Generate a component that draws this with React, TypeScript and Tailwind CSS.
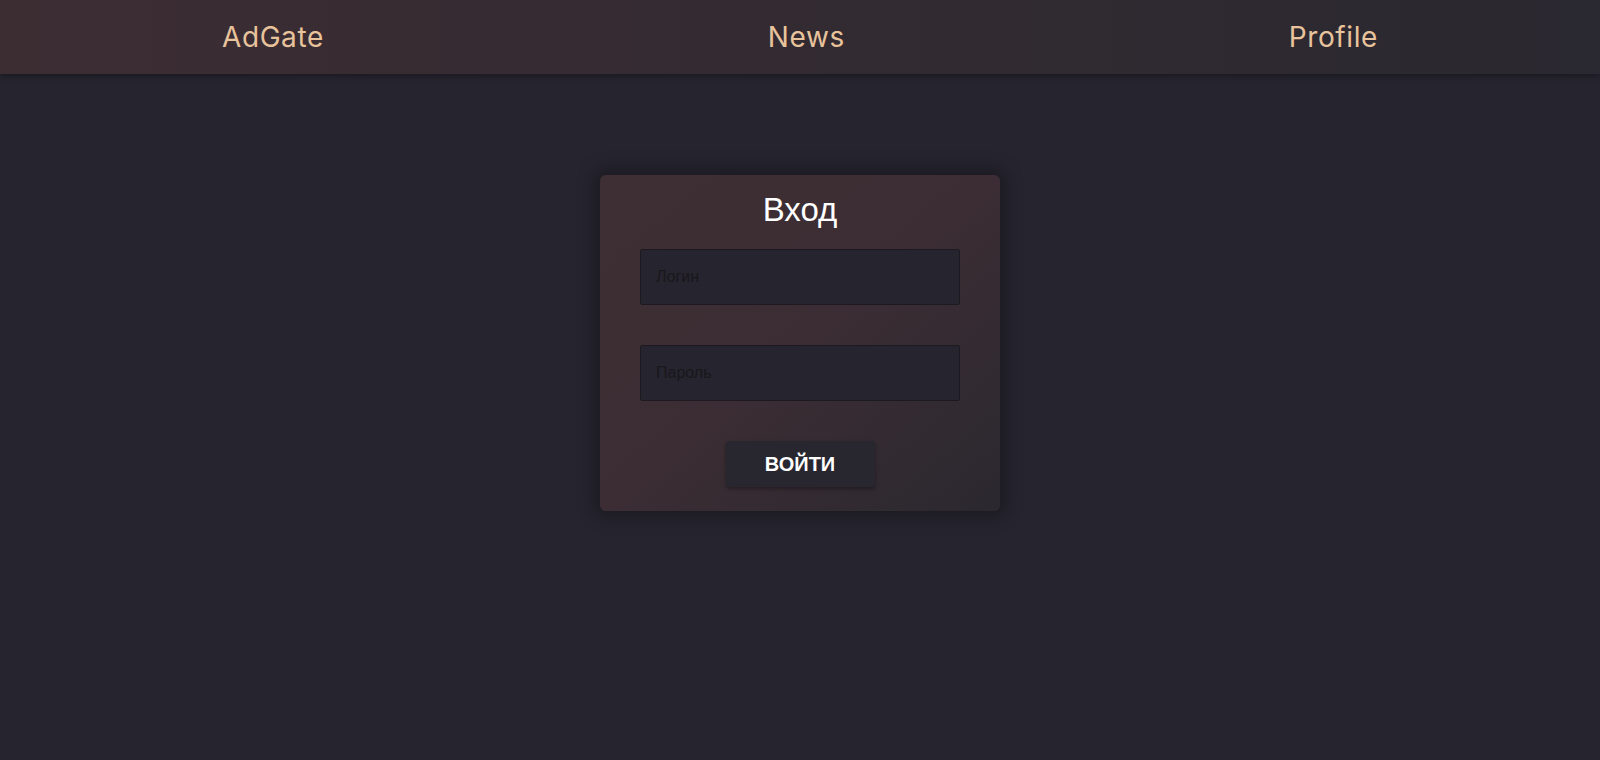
import React, { FormEvent, useState } from 'react';

export default function App(): JSX.Element {
  const [login, setLogin] = useState('');
  const [password, setPassword] = useState('');

  function submit(e: FormEvent) {
    e.preventDefault();
  }

  return (
    <div className="min-h-[760px] bg-[#26242e] font-['Liberation_Sans',Arial,sans-serif]">
      <header className="flex h-[74px] items-center justify-around bg-gradient-to-r from-[#3c2d33] to-[#2a2830] shadow-[0_2px_6px_rgba(0,0,0,0.35)]">
        <a className="font-['Inter',sans-serif] text-[28px] tracking-[0.6px] text-[#e8c39c]" href="#">
          AdGate
        </a>
        <a className="font-['Inter',sans-serif] text-[28px] tracking-[0.6px] text-[#e8c39c]" href="#">
          News
        </a>
        <a className="font-['Inter',sans-serif] text-[28px] tracking-[0.6px] text-[#e8c39c]" href="#">
          Profile
        </a>
      </header>

      <div className="flex justify-center pt-[101px]">
        <form
          className="flex w-[400px] flex-col items-center rounded-md bg-gradient-to-br from-[#3e2f34] via-[#3b2d33] to-[#2b2830] px-10 pt-4 pb-6 shadow-[0_0_18px_6px_rgba(0,0,0,0.3)]"
          onSubmit={submit}
        >
          <h1 className="text-[33px] leading-[1.16] text-white">Вход</h1>
          <input
            type="text"
            value={login}
            onChange={(e) => setLogin(e.target.value)}
            placeholder="Логин"
            className="mt-5 h-[56px] w-[320px] rounded-[2px] border border-[#1c1a20] bg-[#26242e] px-[15px] text-base text-white placeholder-[#19171c] outline-none"
          />
          <input
            type="password"
            value={password}
            onChange={(e) => setPassword(e.target.value)}
            placeholder="Пароль"
            className="mt-10 h-[56px] w-[320px] rounded-[2px] border border-[#1c1a20] bg-[#26242e] px-[15px] text-base text-white placeholder-[#19171c] outline-none"
          />
          <button
            type="submit"
            className="mt-10 h-[46px] w-[149px] rounded bg-[#28262f] text-[20px] font-bold text-white shadow-[0_2px_4px_rgba(0,0,0,0.35)]"
          >
            ВОЙТИ
          </button>
        </form>
      </div>
    </div>
  );
}
